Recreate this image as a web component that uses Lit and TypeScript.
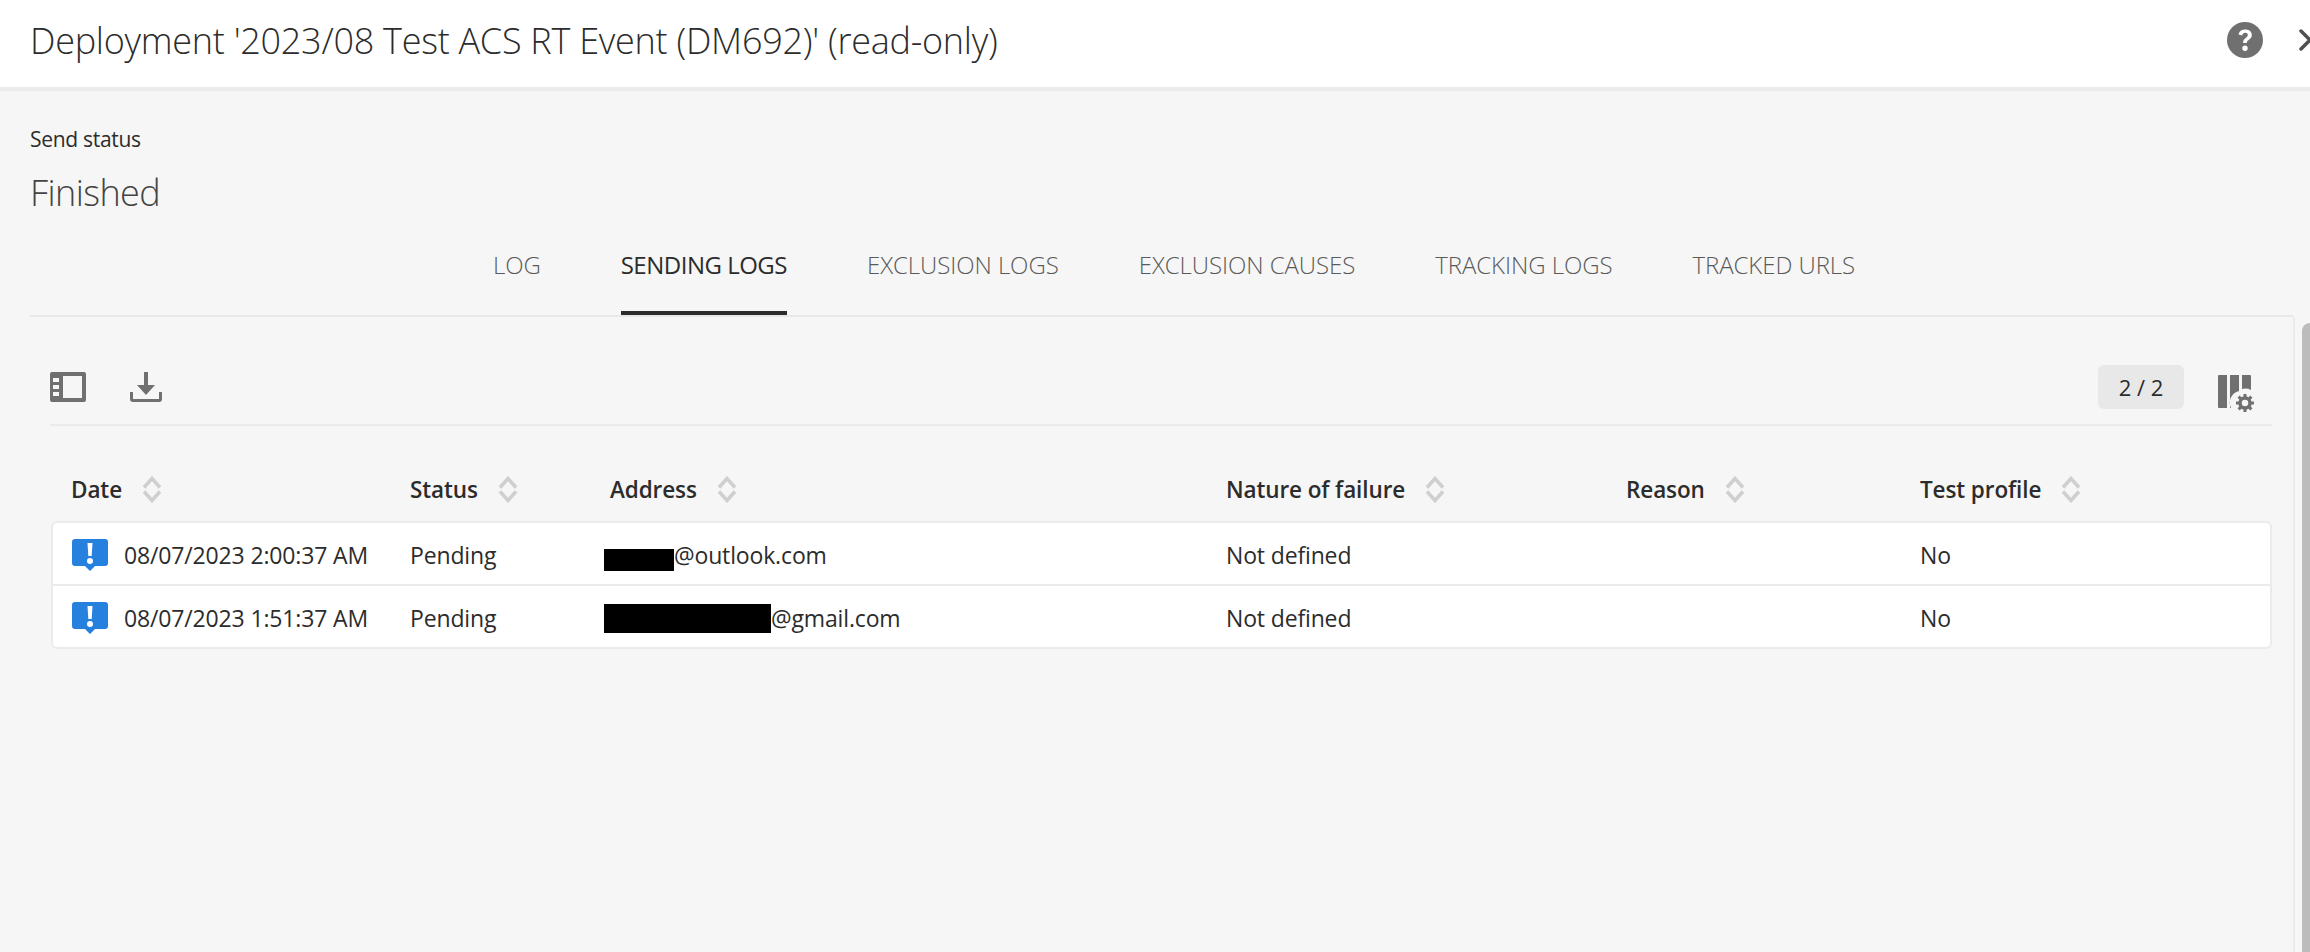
import { LitElement, css, html, svg } from 'lit';
import { customElement } from 'lit/decorators.js';

const tabs = ['LOG', 'SENDING LOGS', 'EXCLUSION LOGS', 'EXCLUSION CAUSES', 'TRACKING LOGS', 'TRACKED URLS'];
const columns = ['Date', 'Status', 'Address', 'Nature of failure', 'Reason', 'Test profile'];
// masks are the black redaction bars, they don't sit centred on the text
const rows = [
	{ date: '08/07/2023 2:00:37 AM', mask: 70, maskH: 22, maskY: 10, domain: '@outlook.com' },
	{ date: '08/07/2023 1:51:37 AM', mask: 167, maskH: 29, maskY: 2, domain: '@gmail.com' },
];

const sortIcon = svg`<svg class="sort" viewBox="0 0 20 27" width="20" height="27"><path d="M2 11.500 10 2.500l8 9M2 15.500l8 9 8-9" fill="none" stroke="#cfcfcf" stroke-width="3.500"/></svg>`;
const infoIcon = svg`<svg class="info" viewBox="0 0 36 32" width="36" height="32"><path d="M3 0h30a3 3 0 0 1 3 3v21a3 3 0 0 1-3 3H23l-5 5-5-5H3a3 3 0 0 1-3-3V3a3 3 0 0 1 3-3Z" fill="#2680de"/><path d="M15.500 4h5l-.8 13h-3.400ZM18 19a3 3 0 1 1 0 6 3 3 0 0 1 0-6Z" fill="#fff"/></svg>`;

@customElement('app-root')
export class AppRoot extends LitElement {

	static styles = css`
		:host {
			display: block;
			height: 952px;
			overflow: hidden;
			background: #f6f6f6;
			color: #2c2c2c;
			font-family: 'Open Sans', 'Noto Sans', sans-serif;
		}
		.header {
			height: 80px;
			display: flex;
			align-items: center;
			padding: 0 0 7px 30px;
			background: #fff;
			border-bottom: 4px solid #ebebeb;
		}
		.title {
			flex: 1;
			font-size: 36px;
			font-weight: 300;
			letter-spacing: -0.27px;
			margin: 0;
		}
		.help {
			margin-right: 36px;
		}
		.chevron {
			width: 11px;
			height: 22px;
			flex: none;
		}
		.status {
			padding: 33px 30px 0;
		}
		.status-label {
			font-size: 21px;
			line-height: 30px;
			letter-spacing: -0.3px;
		}
		.status-value {
			font-size: 36px;
			font-weight: 300;
			line-height: 48px;
			margin-top: 15px;
			color: #444;
			letter-spacing: -0.6px;
		}
		.tabs {
			display: flex;
			justify-content: center;
			gap: 80px;
			height: 98px;
			margin: 0 17px 0 30px;
			padding-left: 25px;
			border-bottom: 2px solid #e8e8e8;
		}
		.tab {
			font-size: 24px;
			font-weight: 300;
			line-height: 96px;
			color: #5a5a5a;
			letter-spacing: -0.07px;
			box-sizing: border-box;
			height: 98px;
		}
		.tab.active {
			color: #2c2c2c;
			font-weight: 400;
			letter-spacing: -0.5px;
			border-bottom: 4px solid #2c2c2c;
		}
		.body {
			display: flex;
			height: 635px;
		}
		.main {
			flex: 1;
			padding: 0 21px 0 51px;
			border-right: 2px solid #ebebeb;
		}
		.rail {
			width: 15px;
			padding: 6px 0 0 7px;
			box-sizing: border-box;
		}
		.thumb {
			height: 100%;
			background: #bcbcbc;
			border-radius: 8px 0 0 0;
		}
		.toolbar {
			display: flex;
			align-items: center;
			height: 109px;
			padding-top: 33px;
			margin-left: -1px;
			border-bottom: 2px solid #ebebeb;
			box-sizing: border-box;
		}
		.toolbar .spacer {
			flex: 1;
		}
		.download {
			margin-left: 44px;
		}
		.count {
			width: 86px;
			height: 44px;
			line-height: 44px;
			text-align: center;
			font-size: 22px;
			background: #e8e8e8;
			border-radius: 6px;
			margin-right: 34px;
		}
		.col-config {
			margin: 12px 18px 0 0;
		}
		.grid {
			display: grid;
			grid-template-columns: 339px 200px 616px 400px 294px 1fr;
			align-items: center;
		}
		.heads {
			height: 95px;
			box-sizing: border-box;
			padding: 32px 0 0 20px;
			font-size: 22.5px;
			font-weight: 600;
			letter-spacing: -0.1px;
		}
		.head {
			display: flex;
			align-items: center;
			gap: 20px;
		}
		.table {
			background: #fff;
			border: 2px solid #ebebeb;
			border-radius: 6px;
			font-size: 23px;
			letter-spacing: -0.15px;
		}
		.row {
			height: 61px;
			box-sizing: border-box;
			padding: 2px 0 0 18px;
		}
		.row + .row {
			border-top: 2px solid #ebebeb;
			height: 63px;
		}
		.date {
			display: flex;
			align-items: center;
			gap: 16px;
			margin-left: 1px;
		}
		.address {
			display: flex;
			align-items: center;
			margin-left: -6px;
		}
		.mask {
			display: block;
			background: #000;
		}
	`

	render() {
		return html`
			<div class="header">
				<h1 class="title">Deployment '2023/08 Test ACS RT Event (DM692)' (read-only)</h1>
				<svg class="help" viewBox="0 0 36 36" width="36" height="36">
					<circle cx="18" cy="18" r="18" fill="#707070"/>
					<path d="M11.500 12.500c.6-3.200 3.200-5 6.800-5 3.900 0 6.500 2.200 6.500 5.400 0 2.500-1.400 3.800-3.100 5-1.400 1-1.900 1.600-1.900 3.100h-3.700c-.1-2.500.8-3.800 2.600-5.100 1.300-1 2.100-1.600 2.100-2.900 0-1.300-1-2.200-2.600-2.200-1.700 0-2.700 1-3 2.700ZM18 23.500a2.700 2.700 0 1 1 0 5.400 2.700 2.700 0 0 1 0-5.400Z" fill="#fff"/>
				</svg>
				<svg class="chevron" viewBox="0 0 11 22">
					<path d="M2 2 11 11 2 20" fill="none" stroke="#505050" stroke-width="3.500" stroke-linecap="round"/>
				</svg>
			</div>
			<div class="status">
				<div class="status-label">Send status</div>
				<div class="status-value">Finished</div>
			</div>
			<div class="tabs">
				${tabs.map((t, i) => html`<div class="tab ${i === 1 ? 'active' : ''}">${t}</div>`)}
			</div>
			<div class="body">
				<div class="main">
					<div class="toolbar">
						<svg viewBox="0 0 36 30" width="36" height="30">
							<path d="M2 0h32a2 2 0 0 1 2 2v26a2 2 0 0 1-2 2H2a2 2 0 0 1-2-2V2a2 2 0 0 1 2-2Zm11 4v22h19V4ZM3 6v4h6V6Zm0 7v4h6v-4Zm0 7v4h6v-4Z" fill="#707070" fill-rule="evenodd"/>
						</svg>
						<svg class="download" viewBox="0 0 32 30" width="32" height="30">
							<path d="M14 0h4v13h7l-9 10-9-10h7Z" fill="#707070"/>
							<path d="M1.500 20v7a1.500 1.500 0 0 0 1.500 1.500h26a1.500 1.500 0 0 0 1.500-1.500v-7" fill="none" stroke="#707070" stroke-width="3"/>
						</svg>
						<div class="spacer"></div>
						<div class="count">2 / 2</div>
						<svg class="col-config" viewBox="0 0 36 37" width="36" height="37">
							<path d="M1 0h8v33H1a1 1 0 0 1-1-1V1a1 1 0 0 1 1-1Zm11 0h9v16a12 12 0 0 0-8 17h-1Zm12 0h8a1 1 0 0 1 1 1v14a12 12 0 0 0-9-1Z" fill="#707070"/>
							<g fill="none" stroke="#707070">
								<circle cx="27" cy="28" r="5" stroke-width="3.500"/>
								<path d="M27 19v4M27 33v4M18 28h4M32 28h4M20.600 21.600l3 3M30.400 31.400l3 3M20.600 34.400l3-3M30.400 24.600l3-3" stroke-width="3"/>
							</g>
						</svg>
					</div>
					<div class="grid heads">
						${columns.map((c) => html`<div class="head">${c}${sortIcon}</div>`)}
					</div>
					<div class="table">
						${rows.map((r) => html`
							<div class="grid row">
								<div class="date">${infoIcon}<span>${r.date}</span></div>
								<div>Pending</div>
								<div class="address">
									<span class="mask" style="width:${r.mask}px;height:${r.maskH}px;margin-top:${r.maskY}px"></span>${r.domain}
								</div>
								<div>Not defined</div>
								<div></div>
								<div>No</div>
							</div>
						`)}
					</div>
				</div>
				<div class="rail"><div class="thumb"></div></div>
			</div>
		`
	}

}

declare global {
	interface HTMLElementTagNameMap {
		'app-root': AppRoot
	}
}
